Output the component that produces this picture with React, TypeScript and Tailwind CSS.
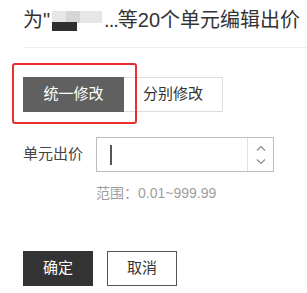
import React from 'react';

const font = { fontFamily: '"Liberation Sans", "Noto Sans CJK SC", sans-serif' };

const Chevron = ({ dir }: { dir: 'up' | 'down' }) => (
  <svg width="10" height="6" viewBox="0 0 10 6" fill="none" stroke="#8a8a8a" strokeWidth="1.2">
    {dir === 'up' ? <path d="M1 5.5 L5 1.5 L9 5.5" /> : <path d="M1 0.5 L5 4.5 L9 0.5" />}
  </svg>
);

export default function App() {
  return (
    <div className="relative w-[307px] h-[293px] overflow-hidden bg-white text-[#333]" style={font}>
      {/* title */}
      <div className="ml-[23px] pt-[6px] h-[48px] border-b border-[#eeeeee]">
        <div className="flex items-center h-[28px] text-[20px] leading-[28px] whitespace-nowrap">
          <span>为"</span>
          <span className="relative inline-block w-[50px] h-[24px] mx-[2px]">
            <span className="absolute left-0 top-[3px] w-[50px] h-[12px] bg-[#e6e6e6]" />
            <span className="absolute left-[14px] top-[3px] w-[14px] h-[12px] bg-[#d6d6d6]" />
            <span className="absolute left-0 top-[14px] w-[25px] h-[9px] bg-[#2f2f2f]" />
          </span>
          <span className="tracking-[-1px]">...</span>
          <span>等20个单元编辑出价</span>
        </div>
      </div>

      {/* tabs */}
      <div className="flex pl-[23px] mt-[29px]">
        <div className="w-[101px] h-[35px] bg-[#606060] text-white text-[15px] flex items-center justify-center">
          统一修改
        </div>
        <div className="w-[99px] h-[35px] border border-l-0 border-[#dddddd] text-[15px] flex items-center justify-center">
          分别修改
        </div>
      </div>
      <div className="absolute left-[12px] top-[63px] w-[125px] h-[61px] border-2 border-[#e8312f] rounded-[3px]" />

      {/* price input */}
      <div className="flex items-center pl-[23px] mt-[25px]">
        <div className="w-[73px] text-[15px] text-[#444]">单元出价</div>
        <div className="flex w-[178px] h-[35px] border border-[#bdbdbd]">
          <div className="flex-1 flex items-center pl-[13px]">
            <span className="block w-[1.5px] h-[20px] bg-[#555]" />
          </div>
          <div className="w-[26px] border-l border-[#e2e2e2] flex flex-col items-center justify-center gap-[8px]">
            <Chevron dir="up" />
            <Chevron dir="down" />
          </div>
        </div>
      </div>
      <div className="pl-[96px] mt-[11px] text-[14px] leading-[20px] text-[#9e9e9e]">范围：0.01~999.99</div>

      {/* actions */}
      <div className="flex gap-[14px] pl-[23px] mt-[48px]">
        <button className="w-[70px] h-[35px] bg-[#333333] text-white text-[15px]">确定</button>
        <button className="w-[70px] h-[35px] border border-[#555555] bg-white text-[15px] text-[#333]">取消</button>
      </div>
    </div>
  );
}
